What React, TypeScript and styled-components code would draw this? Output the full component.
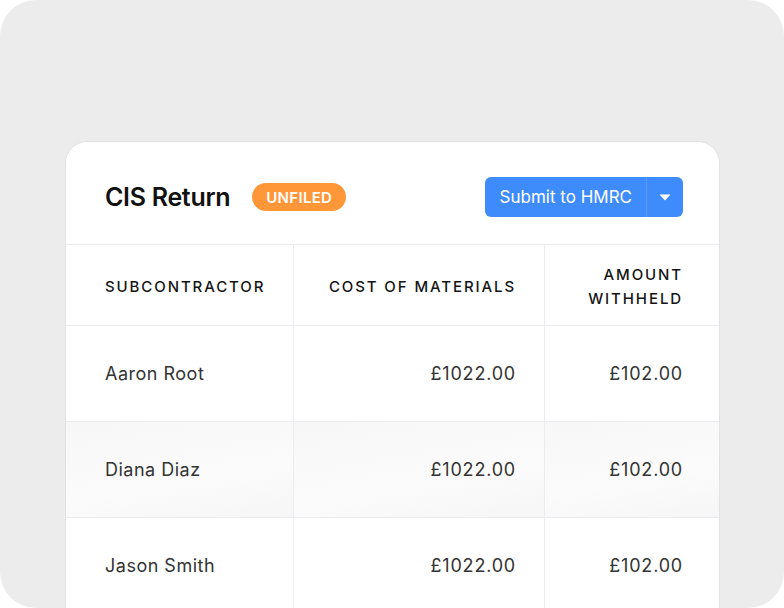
import React from 'react'
import styled, { createGlobalStyle } from 'styled-components'

const GlobalStyle = createGlobalStyle`
  html, body {
    margin: 0;
    padding: 0;
    background: #ffffff;
    overflow: hidden;
  }
  body {
    font-family: Inter, 'Liberation Sans', sans-serif;
    -webkit-font-smoothing: antialiased;
  }
`

const Backdrop = styled.div`
  width: 784px;
  height: 608px;
  box-sizing: border-box;
  background: #ececec;
  border-radius: 36px;
  padding: 141px 64px 0 65px;
`

const Card = styled.div`
  background: #ffffff;
  border: 1px solid #e2e2e4;
  border-radius: 22px;
  overflow: hidden;
  height: 520px;
  box-sizing: border-box;
`

const CardHeader = styled.div`
  height: 103px;
  box-sizing: border-box;
  display: flex;
  align-items: center;
  padding: 8px 36px 0 39px;
  border-bottom: 1px solid #ececf0;
`

const Title = styled.h1`
  margin: 0;
  font-size: 25px;
  font-weight: 600;
  letter-spacing: -0.3px;
  color: #111111;
`

const Badge = styled.span`
  margin-left: 22px;
  height: 28px;
  padding: 0 14px;
  display: inline-flex;
  align-items: center;
  border-radius: 14px;
  background: #ff9638;
  color: #ffffff;
  font-size: 15px;
  font-weight: 600;
  letter-spacing: 0.3px;
`

const SplitButton = styled.div`
  margin-left: auto;
  display: flex;
  height: 40px;
  border-radius: 6px;
  background: #3e8cfb;
  overflow: hidden;
`

const MainAction = styled.button`
  border: 0;
  background: transparent;
  color: #ffffff;
  font-family: inherit;
  font-size: 17px;
  font-weight: 400;
  padding: 0 14px 0 15px;
  border-right: 1px solid #5c9ffb;
`

const CaretAction = styled.button`
  border: 0;
  background: transparent;
  width: 36px;
  display: flex;
  align-items: center;
  justify-content: center;
`

const Table = styled.div`
  display: grid;
  grid-template-columns: 228px 251px 1fr;
`

const HeadCell = styled.div<{ $align?: 'left' | 'right' }>`
  height: 81px;
  box-sizing: border-box;
  display: flex;
  align-items: center;
  justify-content: ${(p) => (p.$align === 'right' ? 'flex-end' : 'flex-start')};
  text-align: ${(p) => p.$align ?? 'left'};
  padding: ${(p) => (p.$align === 'right' ? '4px 28px 0 0' : '4px 0 0 39px')};
  border-right: 1px solid #ececf0;
  border-bottom: 1px solid #ececf0;
  font-size: 15px;
  font-weight: 500;
  letter-spacing: 1.9px;
  line-height: 24px;
  color: #141414;
  text-transform: uppercase;
  &:nth-child(3n) {
    border-right: 0;
    padding-right: 36px;
  }
`

const Cell = styled.div<{ $align?: 'left' | 'right'; $shaded?: boolean }>`
  height: 95px;
  display: flex;
  align-items: center;
  justify-content: ${(p) => (p.$align === 'right' ? 'flex-end' : 'flex-start')};
  padding: ${(p) => (p.$align === 'right' ? '0 28px 0 0' : '0 0 0 39px')};
  border-right: 1px solid #ececf0;
  border-bottom: 1px solid #ececf0;
  background: ${(p) => (p.$shaded ? 'linear-gradient(170deg, #f7f7f8 0%, #fbfbfb 60%, #f6f6f7 100%)' : '#ffffff')};
  font-size: 18px;
  color: #333333;
  letter-spacing: ${(p) => (p.$align === 'right' ? '0.8px' : '0.5px')};
  &:nth-child(3n) {
    border-right: 0;
    padding-right: 36px;
  }
`

const rows = [
  { name: 'Aaron Root', cost: '£1022.00', withheld: '£102.00' },
  { name: 'Diana Diaz', cost: '£1022.00', withheld: '£102.00' },
  { name: 'Jason Smith', cost: '£1022.00', withheld: '£102.00' },
]

export default function App() {
  return (
    <>
      <GlobalStyle />
      <Backdrop>
        <Card>
          <CardHeader>
            <Title>CIS Return</Title>
            <Badge>UNFILED</Badge>
            <SplitButton>
              <MainAction>Submit to HMRC</MainAction>
              <CaretAction aria-label='More options'>
                <svg width='12' height='7' viewBox='0 0 12 7'>
                  <path d='M0.5 0.5h11L6 6.5z' fill='#ffffff' />
                </svg>
              </CaretAction>
            </SplitButton>
          </CardHeader>
          <Table>
            <HeadCell>Subcontractor</HeadCell>
            <HeadCell $align='right'>Cost of materials</HeadCell>
            <HeadCell $align='right'>
              Amount
              <br />
              withheld
            </HeadCell>
            {rows.map((row, i) => (
              <React.Fragment key={row.name}>
                <Cell $shaded={i === 1}>{row.name}</Cell>
                <Cell $align='right' $shaded={i === 1}>
                  {row.cost}
                </Cell>
                <Cell $align='right' $shaded={i === 1}>
                  {row.withheld}
                </Cell>
              </React.Fragment>
            ))}
          </Table>
        </Card>
      </Backdrop>
    </>
  )
}
